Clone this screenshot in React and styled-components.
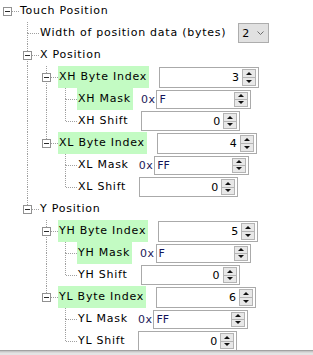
import React from 'react';
import styled, { createGlobalStyle } from 'styled-components';

const GlobalStyle = createGlobalStyle`
  html, body {
    margin: 0;
    padding: 0;
    background: #fff;
  }
  body {
    font-family: "DejaVu Sans", Verdana, sans-serif;
    font-size: 11px;
    letter-spacing: 0.75px;
    color: #000;
  }
`;

const LINE = '#a0a0a0';
const dotV = `repeating-linear-gradient(to bottom, ${LINE} 0 1px, transparent 1px 2px)`;
const dotH = `repeating-linear-gradient(to right, ${LINE} 0 1px, transparent 1px 2px)`;

const Frame = styled.div`
  width: 313px;
  height: 355px;
  display: flex;
  flex-direction: column;
  overflow: hidden;
  background: #fff;
`;

const TreePane = styled.div`
  flex: 1;
  overflow: hidden;
`;

const BottomEdge = styled.div`
  height: 5px;
  flex: none;
  background: linear-gradient(#a2a2a2 0 1px, #c6c6c6 1px 2px, #d8d8d8 2px 3px, #e4e4e4 3px);
`;

const Row = styled.div`
  display: flex;
  align-items: center;
  height: 22px;
  white-space: nowrap;
`;

const guideLayers = (p) => {
  const layers = [];
  if (p.$up) layers.push(`${dotV} 7px 0 / 1px 11px no-repeat`);
  if (p.$down) layers.push(`${dotV} 7px 11px / 1px 11px no-repeat`);
  if (p.$right) layers.push(`${dotH} 8px 11px / ${p.$w - 8}px 1px no-repeat`);
  return layers.length ? layers.join(', ') : 'none';
};

const Guide = styled.div`
  flex: none;
  align-self: stretch;
  display: flex;
  align-items: center;
  padding-left: 3px;
  box-sizing: border-box;
  width: ${(p) => p.$w}px;
  background: ${guideLayers};
`;

const ExpandBox = styled.span`
  width: 9px;
  height: 9px;
  box-sizing: border-box;
  border: 1px solid #919191;
  background: #fff;
  display: flex;
  align-items: center;
  justify-content: center;

  &::after {
    content: '';
    width: 5px;
    height: 1px;
    background: #2b2b2b;
  }
`;

const Label = styled.span`
  align-self: stretch;
  line-height: 22px;
  padding: 0 2px 0 1px;
  background: ${(p) => (p.$hl ? '#c3fbc3' : 'transparent')};
`;

const Editor = styled.div`
  display: flex;
  align-items: center;
  margin-left: ${(p) => p.$gap}px;
`;

const Prefix = styled.span`
  color: #1d1a5a;
  letter-spacing: 0.5px;
  margin-right: 1px;
`;

const Field = styled.div`
  display: flex;
  align-items: center;
  box-sizing: border-box;
  width: ${(p) => p.$w}px;
  height: ${(p) => p.$h}px;
  border: 1px solid #aaaaaa;
  background: #fff;
  padding-right: 2px;
`;

const Value = styled.span`
  flex: 1;
  letter-spacing: 0;
  text-align: ${(p) => (p.$left ? 'left' : 'right')};
  padding: ${(p) => (p.$left ? '0 0 0 2px' : '0 3px 0 0')};
  color: ${(p) => (p.$left ? '#14145a' : '#000')};
`;

const SpinStack = styled.div`
  display: flex;
  flex-direction: column;
  width: 14px;
  height: calc(100% - 2px);
  box-sizing: border-box;
  border: 1px solid #b4b4b4;
  background: #e8e8e8;
`;

const SpinHalf = styled.div`
  flex: 1;
  display: flex;
  align-items: center;
  justify-content: center;
  & + & {
    border-top: 1px solid #b4b4b4;
  }
  &::after {
    content: '';
    width: 0;
    height: 0;
    border-left: 3px solid transparent;
    border-right: 3px solid transparent;
    ${(p) => (p.$down ? 'border-top: 3px solid #111;' : 'border-bottom: 3px solid #111;')}
  }
`;

const Select = styled.div`
  display: flex;
  align-items: center;
  justify-content: space-between;
  box-sizing: border-box;
  width: 31px;
  height: 20px;
  padding: 0 4px 0 3px;
  border: 1px solid #adadad;
  background: #e1e1e1;
`;

const Spin = () => (
  <SpinStack>
    <SpinHalf />
    <SpinHalf $down />
  </SpinStack>
);

const SIZES = {
  byte: { w: 100, h: 21, gap: 10 },
  mask: { w: 95, h: 19, gap: 8 },
  shift: { w: 99, h: 20, gap: 11 },
};

const EditorView = ({ editor }) => {
  if (editor.kind === 'select') {
    return (
      <Editor $gap={10}>
        <Select>
          <span>{editor.value}</span>
          <svg width="7" height="4" viewBox="0 0 7 4">
            <path d="M0.5 0.5 L3.5 3.5 L6.5 0.5" fill="none" stroke="#6d6d6d" strokeWidth="1" />
          </svg>
        </Select>
      </Editor>
    );
  }
  const s = SIZES[editor.kind];
  const isMask = editor.kind === 'mask';
  return (
    <Editor $gap={s.gap}>
      {isMask && <Prefix>0x</Prefix>}
      <Field $w={s.w} $h={s.h}>
        <Value $left={isMask}>{editor.value}</Value>
        <Spin />
      </Field>
    </Editor>
  );
};

const axis = (a, l1, l2) => ({
  label: `${a} Position`,
  children: [
    {
      label: `${a}H Byte Index`,
      hl: true,
      editor: { kind: 'byte', value: l1 },
      children: [
        { label: `${a}H Mask`, hl: true, editor: { kind: 'mask', value: 'F' } },
        { label: `${a}H Shift`, editor: { kind: 'shift', value: 0 } },
      ],
    },
    {
      label: `${a}L Byte Index`,
      hl: true,
      editor: { kind: 'byte', value: l2 },
      children: [
        { label: `${a}L Mask`, editor: { kind: 'mask', value: 'FF' } },
        { label: `${a}L Shift`, editor: { kind: 'shift', value: 0 } },
      ],
    },
  ],
});

const tree = {
  label: 'Touch Position',
  children: [
    { label: 'Width of position data (bytes)', editor: { kind: 'select', value: '2' } },
    axis('X', 3, 4),
    axis('Y', 5, 6),
  ],
};

// flatten the tree into rows, carrying which ancestors still have siblings below
const buildRows = (node, depth, hasNext, isLast, out) => {
  const guides = [];
  for (let k = 0; k < depth; k++) {
    const through = k > 0 && hasNext[k];
    guides.push(<Guide key={k} $w={k === 0 ? 20 : 19} $up={through} $down={through} />);
  }
  guides.push(
    <Guide key="own" $w={19} $up={depth > 0} $down={depth > 0 && !isLast} $right>
      {node.children && <ExpandBox />}
    </Guide>
  );
  out.push(
    <Row key={out.length}>
      {guides}
      <Label $hl={node.hl}>{node.label}</Label>
      {node.editor && <EditorView editor={node.editor} />}
    </Row>
  );
  (node.children || []).forEach((child, i, arr) => {
    const last = i === arr.length - 1;
    buildRows(child, depth + 1, [...hasNext.slice(0, depth + 1), !last], last, out);
  });
  return out;
};

const App = () => (
  <>
    <GlobalStyle />
    <Frame>
      <TreePane>{buildRows(tree, 0, [false], true, [])}</TreePane>
      <BottomEdge />
    </Frame>
  </>
);

export default App;
